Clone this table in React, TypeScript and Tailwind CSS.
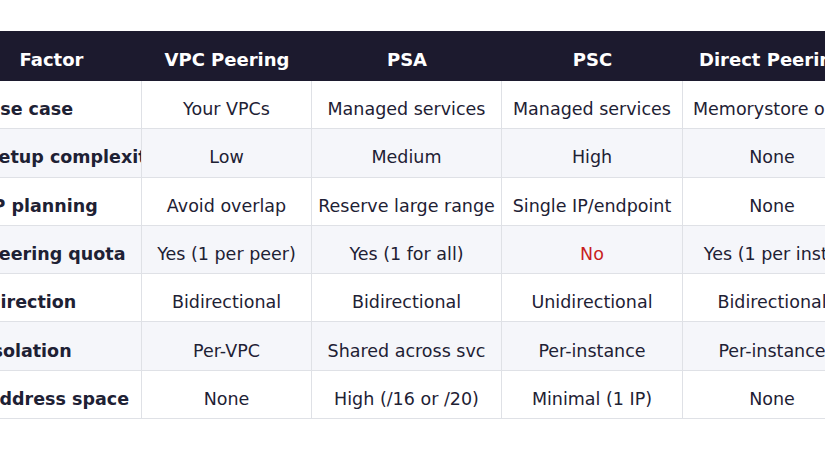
import React from "react";

type Row = { label: string; cells: string[] };

const headers = ["Factor", "VPC Peering", "PSA", "PSC", "Direct Peering"];

const rows: Row[] = [
  { label: "Use case", cells: ["Your VPCs", "Managed services", "Managed services", "Memorystore only"] },
  { label: "Setup complexity", cells: ["Low", "Medium", "High", "None"] },
  { label: "IP planning", cells: ["Avoid overlap", "Reserve large range", "Single IP/endpoint", "None"] },
  { label: "Peering quota", cells: ["Yes (1 per peer)", "Yes (1 for all)", "No", "Yes (1 per inst.)"] },
  { label: "Direction", cells: ["Bidirectional", "Bidirectional", "Unidirectional", "Bidirectional"] },
  { label: "Isolation", cells: ["Per-VPC", "Shared across svc", "Per-instance", "Per-instance"] },
  { label: "Address space", cells: ["None", "High (/16 or /20)", "Minimal (1 IP)", "None"] },
];

const cols = "grid grid-cols-[181px_170px_190px_181px_178px]";

export default function App() {
  return (
    <div className="w-[825px] h-[450px] overflow-hidden bg-white pt-[31px] font-['DejaVu_Sans',sans-serif] text-[#1e2134]">
      <div className="ml-[-39px] w-[900px]">
        {/* header */}
        <div className={`${cols} h-[50px] bg-[#1c1a2e] text-white text-[18px] font-bold`}>
          {headers.map((h) => (
            <div key={h} className="flex items-center justify-center pt-[6px] whitespace-nowrap overflow-hidden">
              {h}
            </div>
          ))}
        </div>

        {/* body */}
        {rows.map((row, i) => (
          <div
            key={row.label}
            className={`${cols} h-[48.3px] text-[17.5px] ${i % 2 === 1 ? "bg-[#f5f6fa]" : "bg-white"}`}
          >
            <div className="flex items-center pl-[25px] pt-[9px] font-bold whitespace-nowrap overflow-hidden border-b border-r border-[#dfe1e6]">
              {row.label}
            </div>
            {row.cells.map((c, j) => (
              <div
                key={j}
                className={`flex items-center justify-center pt-[9px] whitespace-nowrap overflow-hidden border-b border-[#dfe1e6] ${j < 3 ? "border-r" : ""} ${c === "No" ? "text-[#c81e1e]" : ""}`}
              >
                {c}
              </div>
            ))}
          </div>
        ))}
      </div>
    </div>
  );
}
